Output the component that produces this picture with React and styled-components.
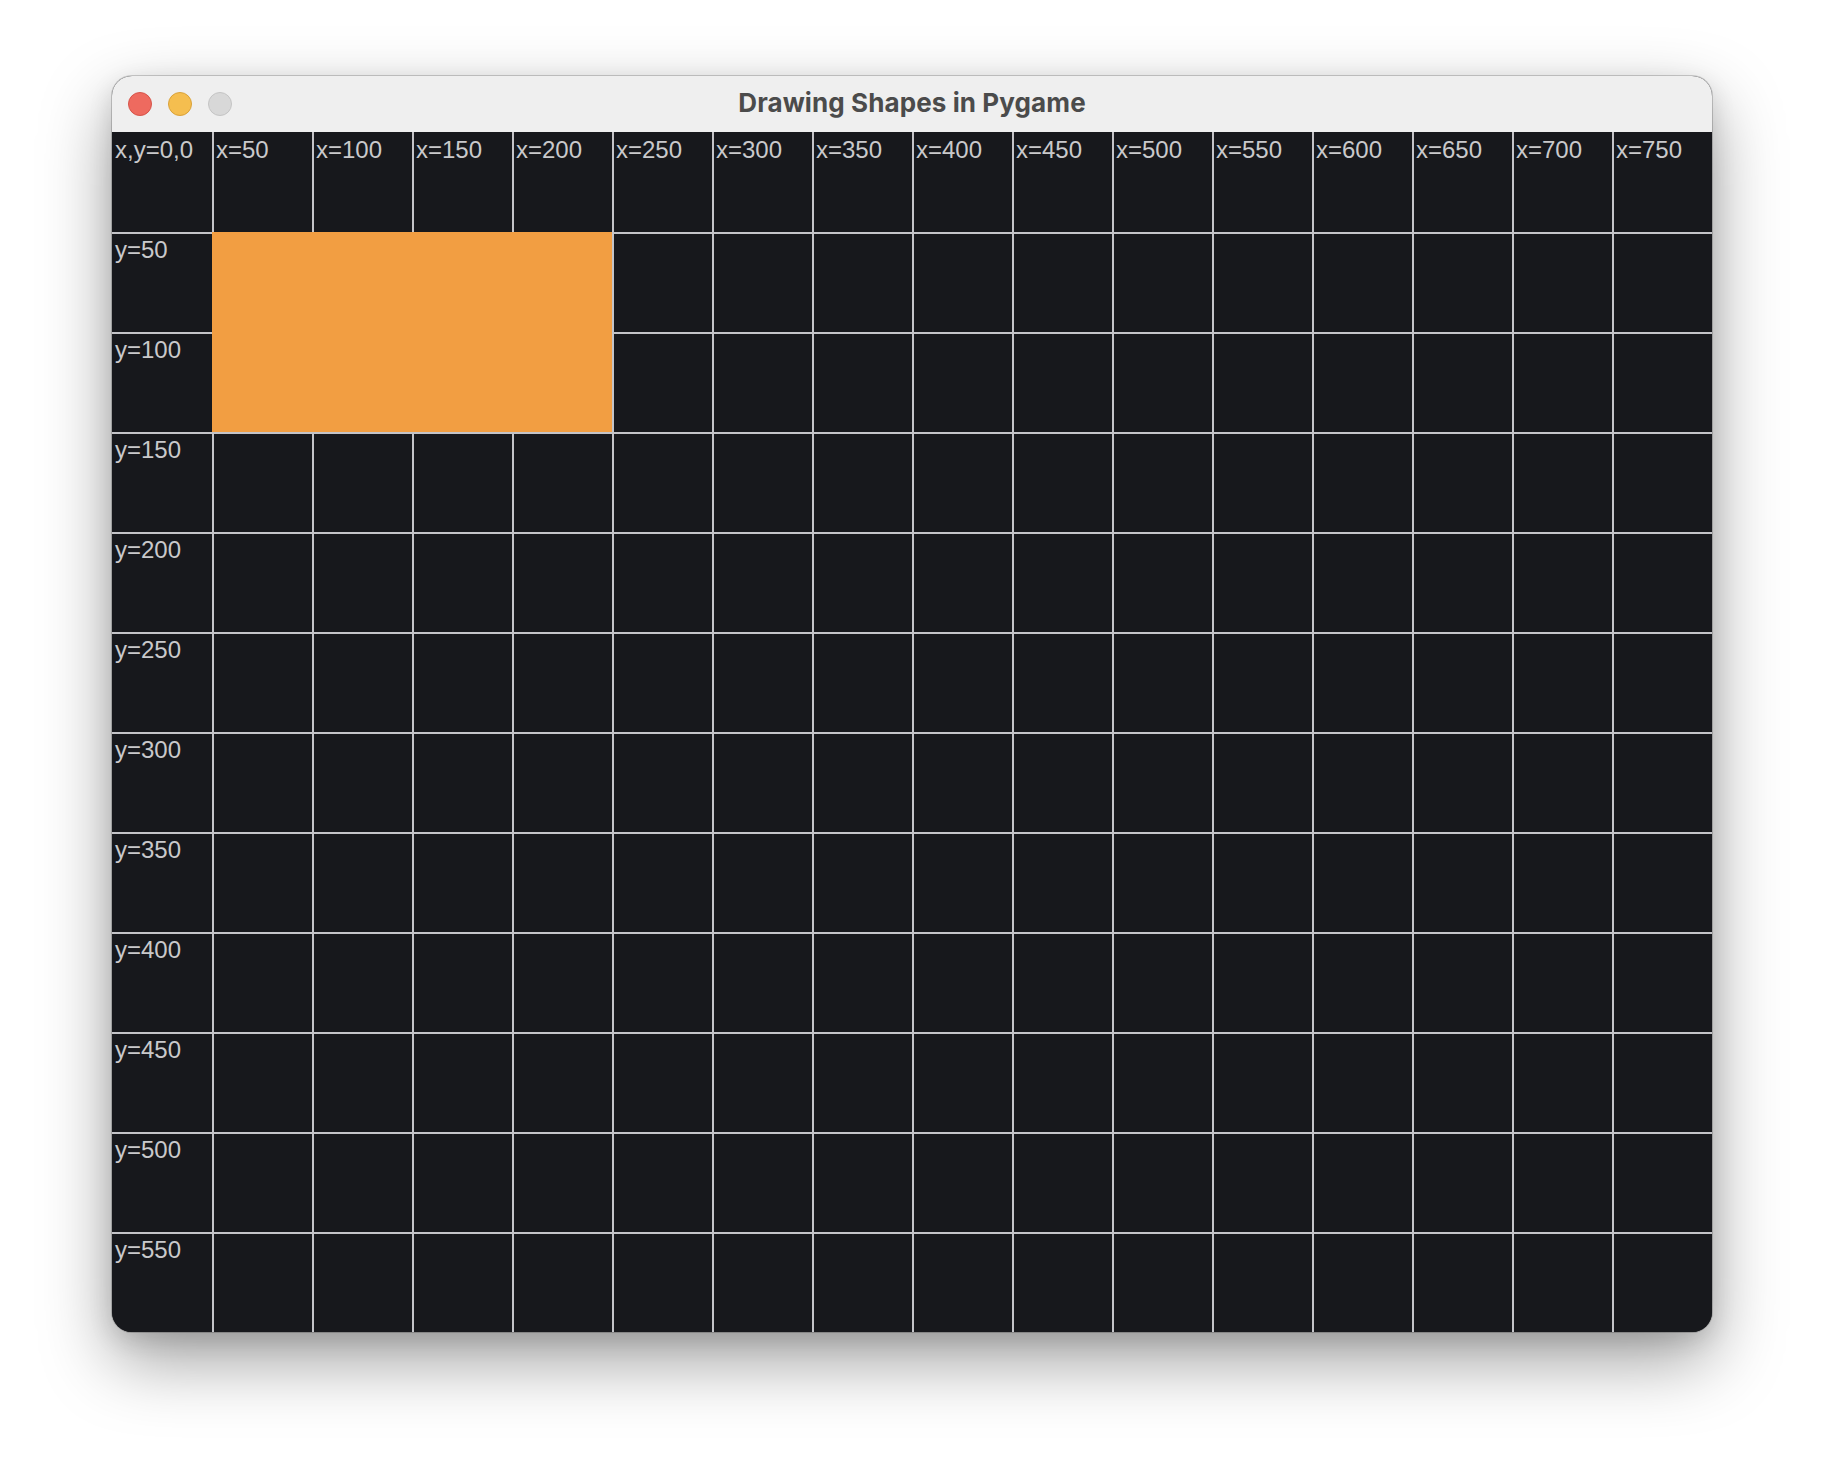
import React from "react";
import styled, { createGlobalStyle } from "styled-components";

const GlobalStyle = createGlobalStyle`
  html, body {
    margin: 0;
    padding: 0;
    background: #ffffff;
  }
  body {
    font-family: "Liberation Sans", Arial, sans-serif;
  }
`;

const Page = styled.div`
  width: 1824px;
  height: 1480px;
  padding: 76px 0 0 112px;
  box-sizing: border-box;
`;

const Window = styled.div`
  width: 1600px;
  border-radius: 20px;
  overflow: hidden;
  background: #17181c;
  box-shadow: 0 0 0 1px rgba(0, 0, 0, 0.18), 0 28px 70px rgba(0, 0, 0, 0.38),
    0 8px 24px rgba(0, 0, 0, 0.12);
`;

const TitleBar = styled.div`
  height: 56px;
  background: #efefef;
  display: flex;
  align-items: center;
  padding-left: 16px;
  box-sizing: border-box;
`;

const Lights = styled.div`
  display: flex;
  gap: 16px;
`;

const Light = styled.span`
  width: 24px;
  height: 24px;
  border-radius: 50%;
  box-sizing: border-box;
  background: ${(p) => p.$color};
  border: 1px solid ${(p) => p.$edge};
`;

const Title = styled.div`
  flex: 1;
  text-align: center;
  margin-left: -120px;
  margin-top: -3px;
  font-family: Inter, "Noto Sans", sans-serif;
  font-weight: 700;
  font-size: 26px;
  color: #4b4b4b;
  letter-spacing: 0.1px;
`;

const Canvas = styled.div`
  display: grid;
  grid-template-columns: repeat(16, 100px);
  grid-template-rows: repeat(12, 100px);
  background: #17181c;
`;

const Cell = styled.div`
  box-sizing: border-box;
  border-left: ${(p) => (p.$col > 0 ? "2px solid #c4c4c8" : "none")};
  border-top: ${(p) => (p.$row > 0 ? "2px solid #c4c4c8" : "none")};
  padding-top: ${(p) => (p.$row > 0 ? 4 : 6)}px;
  padding-left: ${(p) => (p.$col > 0 ? 2 : 3)}px;
  grid-column: ${(p) => p.$col + 1};
  grid-row: ${(p) => p.$row + 1};
  font-size: 24px;
  line-height: 24px;
  color: #c9c9cb;
  white-space: nowrap;
`;

const Shape = styled.div`
  grid-column: ${(p) => p.$x + 1} / span ${(p) => p.$w};
  grid-row: ${(p) => p.$y + 1} / span ${(p) => p.$h};
  background: ${(p) => p.$color};
`;

const COLS = 16;
const ROWS = 12;

function label(row, col) {
  if (row === 0 && col === 0) return "x,y=0,0";
  if (row === 0) return `x=${col * 50}`;
  if (col === 0) return `y=${row * 50}`;
  return null;
}

export default function App() {
  const cells = [];
  for (let r = 0; r < ROWS; r++) {
    for (let c = 0; c < COLS; c++) {
      cells.push(
        <Cell key={`${r}-${c}`} $row={r} $col={c}>
          {label(r, c)}
        </Cell>
      );
    }
  }

  return (
    <Page>
      <GlobalStyle />
      <Window>
        <TitleBar>
          <Lights>
            <Light $color="#ee6a5f" $edge="#d6544a" />
            <Light $color="#f5be4f" $edge="#d9a23a" />
            <Light $color="#d8d8d8" $edge="#c4c4c4" />
          </Lights>
          <Title>Drawing Shapes in Pygame</Title>
        </TitleBar>
        <Canvas>
          {cells}
          {/* pygame.draw.rect(screen, orange, (50, 50, 200, 100)) */}
          <Shape $x={1} $y={1} $w={4} $h={2} $color="#f29e42" />
        </Canvas>
      </Window>
    </Page>
  );
}
